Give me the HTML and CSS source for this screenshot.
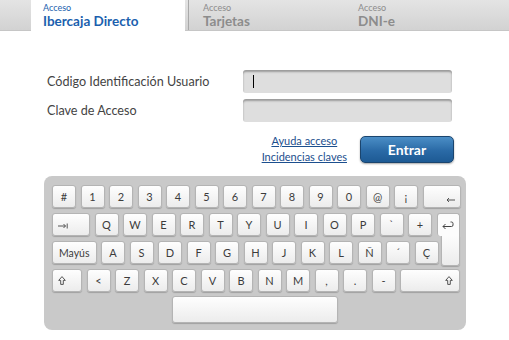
FILE: index.html
```html
<!DOCTYPE html>
<html>
<head>
    <title>Acceso Ibercaja Directo</title>
    <meta name="viewport" content="width=device-width, initial-scale=1.0">
    <link rel="stylesheet" href="styles.css">
</head>
<body>
    <div class="tabs">
        <div class="tab active">
            <span class="tab-small">Acceso</span>
            <span class="tab-title">Ibercaja Directo</span>
        </div>
        <div class="tab second">
            <span class="tab-small">Acceso</span>
            <span class="tab-title">Tarjetas</span>
        </div>
        <div class="tab third">
            <span class="tab-small">Acceso</span>
            <span class="tab-title">DNI-e</span>
        </div>
    </div>

    <div class="login">
        <div class="field">
            <label>Código Identificación Usuario</label>
            <div class="input"><span class="caret"></span></div>
        </div>
        <div class="field">
            <label>Clave de Acceso</label>
            <div class="input"></div>
        </div>
        <div class="actions">
            <div class="links">
                <a href="#">Ayuda acceso</a>
                <a href="#">Incidencias claves</a>
            </div>
            <button class="enter-btn">Entrar</button>
        </div>
    </div>

    <!-- Virtual keyboard -->
    <div class="keyboard">
        <div class="row">
            <span class="key">#</span>
            <span class="key">1</span>
            <span class="key">2</span>
            <span class="key">3</span>
            <span class="key">4</span>
            <span class="key">5</span>
            <span class="key">6</span>
            <span class="key">7</span>
            <span class="key">8</span>
            <span class="key">9</span>
            <span class="key">0</span>
            <span class="key">@</span>
            <span class="key">¡</span>
            <span class="key key-back">
                <svg width="9" height="6" viewBox="0 0 9 6"><path d="M9 3H1M3 1L1 3l2 2" fill="none" stroke="#444" stroke-width="0.9"/></svg>
            </span>
        </div>
        <div class="row">
            <span class="key key-tab">
                <svg width="10" height="6" viewBox="0 0 10 6"><path d="M0 3h7.5M5.5 1l2 2-2 2M9.2 0.5v5" fill="none" stroke="#444" stroke-width="0.9"/></svg>
            </span>
            <span class="key">Q</span>
            <span class="key">W</span>
            <span class="key">E</span>
            <span class="key">R</span>
            <span class="key">T</span>
            <span class="key">Y</span>
            <span class="key">U</span>
            <span class="key">I</span>
            <span class="key">O</span>
            <span class="key">P</span>
            <span class="key">`</span>
            <span class="key">+</span>
            <span class="key key-enter">
                <svg width="12" height="8" viewBox="0 0 12 8"><path d="M8.5 1h1a1.5 1.5 0 0 1 1.5 1.5v1.5a1.5 1.5 0 0 1-1.5 1.5H1M3.5 3L1 5.5 3.5 8" fill="none" stroke="#444" stroke-width="1"/></svg>
            </span>
        </div>
        <div class="row">
            <span class="key key-caps">Mayús</span>
            <span class="key">A</span>
            <span class="key">S</span>
            <span class="key">D</span>
            <span class="key">F</span>
            <span class="key">G</span>
            <span class="key">H</span>
            <span class="key">J</span>
            <span class="key">K</span>
            <span class="key">L</span>
            <span class="key">Ñ</span>
            <span class="key">´</span>
            <span class="key">Ç</span>
        </div>
        <div class="row">
            <span class="key key-shift">
                <svg width="8" height="9" viewBox="0 0 8 9"><path d="M4 0.6L0.7 4.4h2v4h2.6v-4h2z" fill="none" stroke="#444" stroke-width="0.9"/></svg>
            </span>
            <span class="key">&lt;</span>
            <span class="key">Z</span>
            <span class="key">X</span>
            <span class="key">C</span>
            <span class="key">V</span>
            <span class="key">B</span>
            <span class="key">N</span>
            <span class="key">M</span>
            <span class="key">,</span>
            <span class="key">.</span>
            <span class="key">-</span>
            <span class="key key-shift-r">
                <svg width="8" height="9" viewBox="0 0 8 9"><path d="M4 0.6L0.7 4.4h2v4h2.6v-4h2z" fill="none" stroke="#444" stroke-width="0.9"/></svg>
            </span>
        </div>
        <div class="row">
            <span class="key key-space"></span>
        </div>
    </div>
</body>
</html>
```

FILE: styles.css
```css
/* Base */
* {
    box-sizing: border-box;
    margin: 0;
    padding: 0;
}

body {
    font-family: 'Lato', 'Open Sans', sans-serif;
    background: #fff;
    color: #444;
}

/* Tabs header */
.tabs {
    display: flex;
    height: 31px;
    padding-left: 31px;
    background: linear-gradient(#e4e4e4, #d2d2d2);
    border-bottom: 1px solid #c6c6c6;
}

.tab {
    display: flex;
    flex-direction: column;
    padding-top: 3px;
    color: #8c8c8c;
}

.tab.active {
    width: 154px;
    height: 33px;
    padding-left: 12px;
    background: #fff;
    color: #1b5fae;
    margin-right: 3px;
}

.tab.second {
    width: 155px;
    padding-left: 14px;
    border-left: 1px solid #a9a9a9;
}

.tab.third {
    padding-left: 15px;
}

.tab-small {
    font-size: 9px;
    line-height: 10px;
}

.tab-title {
    font-size: 13.5px;
    font-weight: bold;
    line-height: 16px;
}

/* Login form */
.login {
    padding: 39px 0 0 47px;
}

.field {
    display: flex;
    align-items: center;
    margin-bottom: 6px;
}

.field label {
    width: 196px;
    font-size: 12.6px;
    color: #444;
}

.input {
    width: 209px;
    height: 23px;
    background: #dedede;
    border-radius: 3px;
    box-shadow: inset 0 2px 2px rgba(0, 0, 0, 0.3);
    position: relative;
}

.caret {
    position: absolute;
    left: 10px;
    top: 5px;
    width: 1px;
    height: 13px;
    background: #000;
}

.actions {
    display: flex;
    align-items: center;
    justify-content: flex-end;
    width: 407px;
    margin-top: 11px;
}

.links {
    display: flex;
    flex-direction: column;
    align-items: center;
    margin-right: 13px;
}

.links a {
    color: #1c4f8e;
    font-size: 11px;
    line-height: 16px;
}

.enter-btn {
    width: 94px;
    height: 27px;
    border: 1px solid #1b456e;
    border-radius: 5px;
    background: linear-gradient(#4b8ec6, #2a6aa6 55%, #1d5a94);
    box-shadow: 0 1px 2px rgba(0, 0, 0, 0.35);
    color: #fff;
    font-family: inherit;
    font-size: 14px;
    font-weight: bold;
}

/* Keyboard */
.keyboard {
    width: 422px;
    height: 154px;
    margin: 11px 0 0 44px;
    padding: 9px 0 0 8px;
    background: #c9c9c9;
    border-radius: 8px;
}

.row {
    display: flex;
    gap: 4.5px;
    height: 23px;
    margin-bottom: 5px;
}

.key {
    flex: none;
    position: relative;
    display: flex;
    align-items: center;
    justify-content: center;
    width: 24px;
    height: 23px;
    border: 1px solid #b4b4b4;
    border-radius: 3px;
    background: linear-gradient(#fefefe, #ececec);
    box-shadow: 0 1px 1px rgba(0, 0, 0, 0.2);
    font-size: 11px;
    color: #3c3c3c;
}

.key-back {
    width: 38px;
    align-items: flex-end;
    justify-content: flex-end;
    padding: 0 5px 4px 0;
}

.key-tab {
    width: 38px;
    align-items: flex-end;
    justify-content: flex-start;
    padding: 0 0 6px 5px;
}

/* Enter key is L-shaped: top part in row 2, tail down into row 3 */
.key-enter {
    width: 23.5px;
    border-bottom: none;
    border-radius: 3px 3px 0 3px;
    background: #fcfcfc;
    box-shadow: none;
}

.key-enter::after {
    content: '';
    position: absolute;
    top: 22px;
    right: -1px;
    width: 17px;
    height: 29px;
    background: linear-gradient(#fcfcfc, #ececec);
    border: 1px solid #b4b4b4;
    border-top: none;
    border-radius: 0 0 3px 3px;
    box-shadow: 0 1px 1px rgba(0, 0, 0, 0.2);
}

.key-caps {
    width: 44.5px;
    font-size: 10.5px;
}

.key-shift {
    width: 30px;
    justify-content: flex-start;
    padding-left: 5px;
}

.key-shift-r {
    width: 60px;
    justify-content: flex-end;
    padding-right: 6px;
}

.key-space {
    width: 166px;
    height: 27px;
    margin: -1px 0 0 120px;
}
```
